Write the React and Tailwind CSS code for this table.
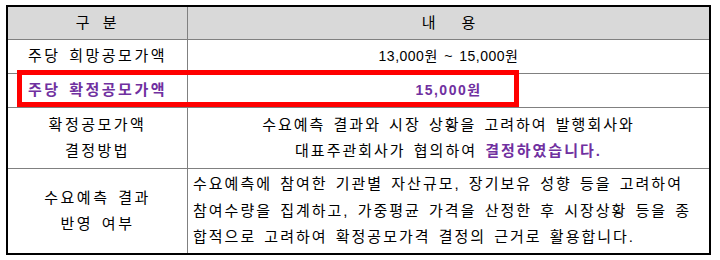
export default function App() {
    const line = 'border-b border-[#808080]';
    const left = 'flex w-[180px] shrink-0 flex-col items-center justify-center border-r border-[#808080] tracking-[2.5px]';
    const right = 'flex flex-1 flex-col items-center justify-center tracking-[2px]';

    return (
        <div className="relative h-[260px] w-[720px] bg-white pl-[6px] pt-[5px] font-['Liberation_Sans','Noto_Sans_CJK_KR',sans-serif] text-[15px] text-black [word-spacing:2px]">
            <div className="w-[705px] border-2 border-black">
                {/* 머리글 */}
                <div className={`flex h-[33px] bg-[#d9d9d9] ${line}`}>
                    <div className={left}>
                        <span className="[word-spacing:4px]">구 분</span>
                    </div>
                    <div className="flex flex-1 items-center justify-center gap-[26px]">
                        <span>내</span>
                        <span>용</span>
                    </div>
                </div>

                <div className={`flex h-[34px] ${line}`}>
                    <div className={left}>주당 희망공모가액</div>
                    <div className="flex flex-1 items-center justify-center text-[14px] tracking-[0.5px] [word-spacing:2px]">
                        13,000원 ~ 15,000원
                    </div>
                </div>

                <div className={`flex h-[34px] ${line}`}>
                    <div className={`${left} font-bold text-[#7030a0]`}>주당 확정공모가액</div>
                    <div className="flex flex-1 items-center justify-center text-[14px] font-bold tracking-[1.5px] text-[#7030a0]">
                        15,000원
                    </div>
                </div>

                <div className={`flex h-[61px] leading-[26px] ${line}`}>
                    <div className={left}>
                        <span>확정공모가액</span>
                        <span>결정방법</span>
                    </div>
                    <div className={right}>
                        <span>수요예측 결과와 시장 상황을 고려하여 발행회사와</span>
                        <span>
                            대표주관회사가 협의하여{' '}
                            <b className="font-bold text-[#7030a0]">결정하였습니다.</b>
                        </span>
                    </div>
                </div>

                <div className="flex h-[84px] leading-[26.5px]">
                    <div className={left}>
                        <span>수요예측 결과</span>
                        <span>반영 여부</span>
                    </div>
                    <div className="flex flex-1 flex-col justify-center whitespace-nowrap pl-[5px] tracking-[2px]">
                        <span>수요예측에 참여한 기관별 자산규모, 장기보유 성향 등을 고려하여</span>
                        <span>참여수량을 집계하고, 가중평균 가격을 산정한 후 시장상황 등을 종</span>
                        <span>합적으로 고려하여 확정공모가격 결정의 근거로 활용합니다.</span>
                    </div>
                </div>
            </div>

            {/* 강조 테두리 */}
            <div className="absolute left-[17px] top-[70px] h-[37px] w-[502px] border-[5px] border-[#ff0000]" />
        </div>
    );
}
